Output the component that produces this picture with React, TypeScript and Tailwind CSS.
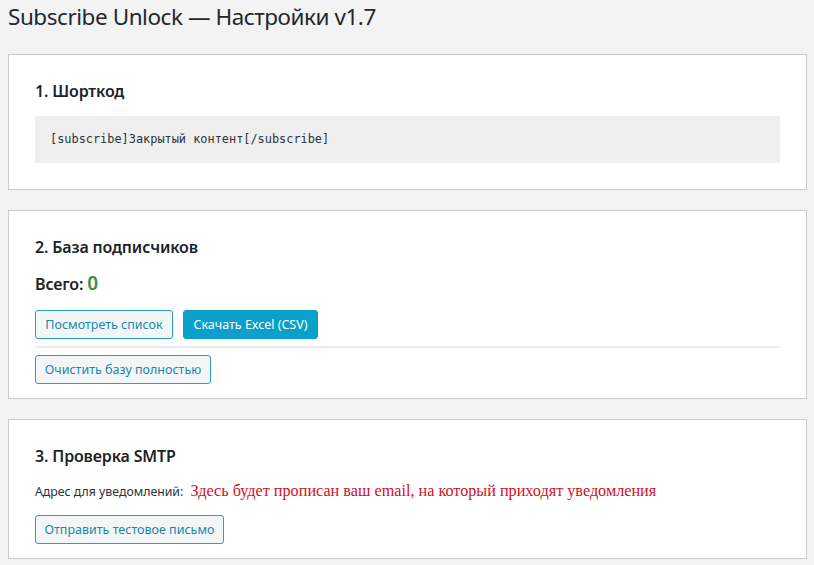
import React from 'react';

// Plugin settings screen: shortcode, subscriber base, SMTP check
const ui = "font-['Noto_Sans',_'Open_Sans',_sans-serif]";

function Card({ children }: { children: React.ReactNode }) {
  return (
    <div className="bg-white border border-[#c9cbce] px-[26px] pt-[25px]">
      {children}
    </div>
  );
}

function Heading({ children }: { children: React.ReactNode }) {
  return (
    <h2 className="text-[16px] leading-[22px] tracking-[-0.15px] font-semibold text-[#1d2327]">{children}</h2>
  );
}

function Button({
  children,
  width,
  primary = false,
}: {
  children: React.ReactNode;
  width: string;
  primary?: boolean;
}) {
  const base = `${width} h-[29px] rounded-[3px] text-[12.5px] leading-[27px] border whitespace-nowrap text-center`;
  return primary ? (
    <button className={`${base} bg-[#0aa0cb] border-[#0aa0cb] text-white`}>{children}</button>
  ) : (
    <button className={`${base} bg-[#f3f6f7] border-[#2a9fc6] text-[#1b86ab]`}>{children}</button>
  );
}

export default function App() {
  const total = 0;

  return (
    <div className={`min-h-screen bg-[#f3f3f3] ${ui} text-[#1d2327] pl-2 pr-[7px] pt-[2px] pb-4`}>
      <h1 className="text-[22.5px] leading-[30px] tracking-[-0.45px] font-normal text-[#23282d]">
        Subscribe Unlock — Настройки v1.7
      </h1>

      <div className="mt-[22px] flex flex-col gap-5">
        <Card>
          <Heading>1. Шорткод</Heading>
          <div className="mt-[14px] mb-[26px] h-[47px] bg-[#efefef] px-[15px] flex items-center">
            <code className="font-['DejaVu_Sans_Mono',_monospace] text-[11.9px] text-[#2c3338]">
              [subscribe]Закрытый контент[/subscribe]
            </code>
          </div>
        </Card>

        <Card>
          <Heading>2. База подписчиков</Heading>
          <p className="mt-[13px] text-[16px] leading-[24px] tracking-[-0.15px] font-semibold">
            Всего: <span className="text-[19px] text-[#3a8f3a]">{total}</span>
          </p>
          <div className="mt-[14px] flex gap-[10px]">
            <Button width="w-[138px]">Посмотреть список</Button>
            <Button width="w-[135px]" primary>
              Скачать Excel (CSV)
            </Button>
          </div>
          <hr className="mt-[7px] border-0 border-t-2 border-[#ececec]" />
          <div className="mt-[7px] mb-[14px] flex">
            <Button width="w-[176px]">Очистить базу полностью</Button>
          </div>
        </Card>

        <Card>
          <Heading>3. Проверка SMTP</Heading>
          <p className="mt-[14px] text-[12.3px] leading-[20px] text-[#2c3338]">
            Адрес для уведомлений:{' '}
            <span className="ml-[4px] font-['Liberation_Serif',_serif] text-[16.2px] text-[#d0101e]">
              Здесь будет прописан ваш email, на который приходят уведомления
            </span>
          </p>
          <div className="mt-[13px] mb-[14px] flex">
            <Button width="w-[189px]">Отправить тестовое письмо</Button>
          </div>
        </Card>
      </div>
    </div>
  );
}
